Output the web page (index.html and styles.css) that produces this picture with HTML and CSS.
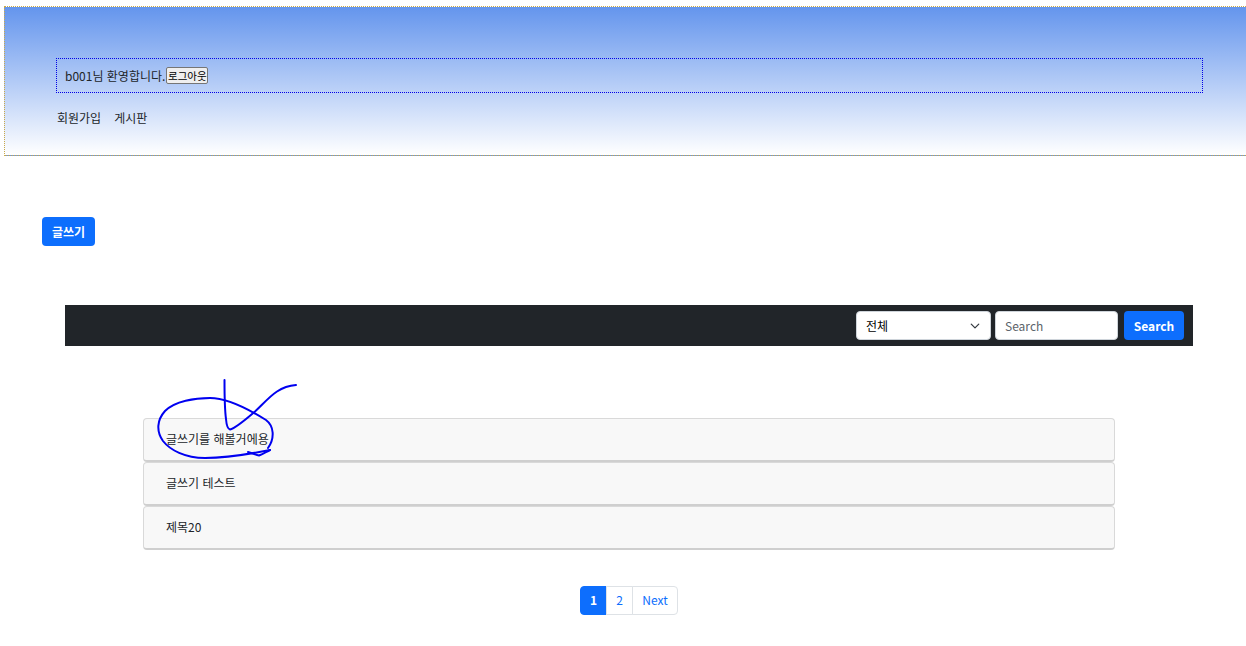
FILE: index.html
```html
<!DOCTYPE html>
<html lang="ko">
<head>
<meta charset="utf-8">
<title>게시판</title>
<link rel="stylesheet" href="styles.css">
</head>
<body>
<header class="site-header">
  <div class="login-box">
    <span>b001님 환영합니다.</span><button class="logout" type="button">로그아웃</button>
  </div>
  <nav class="site-nav"><a href="#">회원가입</a><a href="#">게시판</a></nav>
</header>
<div class="write-row"><a class="btn btn-primary" href="#">글쓰기</a></div>
<div class="search-bar">
  <div class="select"><span>전체</span>
    <svg class="chevron" viewBox="0 0 16 16" width="10" height="10"><path d="M2 5l6 6 6-6" fill="none" stroke="#343a40" stroke-width="2" stroke-linecap="round" stroke-linejoin="round"/></svg>
  </div>
  <div class="search-input">Search</div>
  <a class="btn btn-primary btn-search" href="#">Search</a>
</div>
<main class="post-list">
  <a class="post" href="#">글쓰기를 해볼거에용</a>
  <a class="post" href="#">글쓰기 테스트</a>
  <a class="post" href="#">제목20</a>
</main>
<nav class="pagination">
  <a class="page active" href="#">1</a><a class="page" href="#">2</a><a class="page" href="#">Next</a>
</nav>
<svg class="scribble" width="1246" height="646" viewBox="0 0 1246 646" fill="none" stroke="#0000f0" stroke-width="2" stroke-linecap="round" stroke-linejoin="round">
  <path d="M224.500 380C224.500 392 224.500 408 226 419C226.500 425 227.500 429 230 429.500C235 428.500 244 421 255 411.500C263 404 270 396 277 391.500C283 387.500 290 385.500 296 385"/>
  <path d="M270 450C250 454 225 458 205 458C185 458 170 450 163 441C156 431 157 420 165 411C175 401 195 398 210 398C228 398 250 410 266 420C274 426 275 438 268 448"/>
  <path d="M248 452C252 453 256 455 259 455.500C262 454.500 266 452 270 450"/>
</svg>
</body>
</html>
```
FILE: styles.css
```css
* { box-sizing: border-box; }
html, body { margin: 0; padding: 0; }
body {
  position: relative;
  height: 646px;
  overflow: hidden;
  background: #fff;
  color: #212529;
  font-family: "Noto Sans CJK KR", "Noto Sans", sans-serif;
  font-size: 12px;
  line-height: 18px;
}
a { text-decoration: none; color: inherit; }

.site-header {
  margin: 6px 0 0 4px;
  width: 1242px;
  height: 150px;
  padding: 51px 43px 0 51px;
  border: 1px dotted #c9a94a;
  border-right: 0;
  background: linear-gradient(#6495ed, #fff);
}
.login-box {
  display: flex;
  align-items: center;
  height: 35px;
  padding-left: 8px;
  border: 1px dotted #0000e6;
}
.logout {
  width: 42px;
  height: 17px;
  margin-left: 1px;
  padding: 0;
  border: 1px solid #767676;
  border-radius: 2px;
  background: #efefef;
  color: #000;
  font: 10.500px/15px "Noto Sans CJK KR", sans-serif;
}
.site-nav { display: flex; gap: 13px; margin-top: 16px; padding-left: 1px; }

.write-row { margin: 61px 0 0 42px; }
.btn {
  display: inline-flex;
  align-items: center;
  justify-content: center;
  border-radius: 4px;
  font-weight: 700;
}
.btn-primary { background: #0d6efd; color: #fff; }
.write-row .btn { width: 53px; height: 29px; }

.search-bar {
  display: flex;
  align-items: center;
  justify-content: flex-end;
  gap: 4px;
  width: 1128px;
  height: 41px;
  margin: 59px 0 0 65px;
  padding-right: 9px;
  background: #212529;
}
.select, .search-input {
  display: flex;
  align-items: center;
  height: 29px;
  padding: 0 10px 0 9px;
  border: 1px solid #ced4da;
  border-radius: 4px;
  background: #fff;
}
.select { justify-content: space-between; width: 135px; color: #000; }
.search-input { width: 123px; color: #5c636a; }
.btn-search { width: 60px; height: 29px; margin-left: 2px; }

.post-list {
  display: flex;
  flex-direction: column;
  width: 972px;
  margin: 72px 0 0 143px;
}
.post {
  display: flex;
  align-items: center;
  height: 44px;
  padding: 0 0 1px 22px;
  border: 1px solid #d9d9d9;
  border-bottom: 2px solid #cfcfcf;
  border-radius: 4px;
  background: #f8f8f8;
}

.pagination { display: flex; justify-content: center; margin: 36px 0 0 12px; }
.page {
  display: flex;
  align-items: center;
  justify-content: center;
  height: 29px;
  width: 27px;
  margin-left: -1px;
  padding-bottom: 1px;
  border: 1px solid #dee2e6;
  color: #0d6efd;
  background: #fff;
}
.page:first-child { margin-left: 0; border-radius: 4px 0 0 4px; }
.page:last-child { width: 46px; border-radius: 0 4px 4px 0; }
.page.active { background: #0d6efd; border-color: #0d6efd; color: #fff; font-weight: 700; }

.scribble { position: absolute; top: 0; left: 0; pointer-events: none; }
```
